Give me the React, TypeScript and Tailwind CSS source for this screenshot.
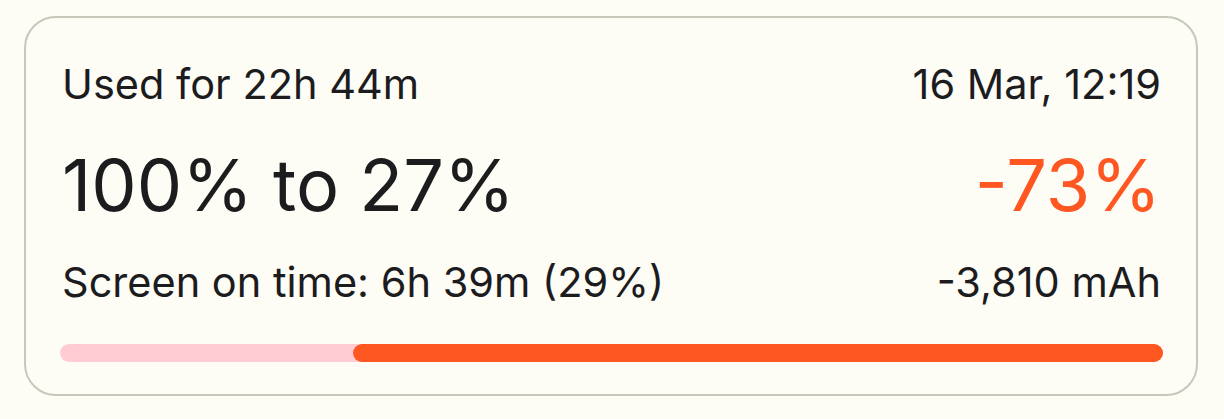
export default function App() {
  return (
    <div className="w-[1224px] h-[419px] bg-[#fdfdf6] pt-[16px] pl-[24px]" style={{ fontFamily: "Inter, 'Noto Sans', sans-serif" }}>
      <div className="w-[1174px] h-[380px] rounded-[32px] border-2 border-[#c5c8ba] bg-[#fdfdf6] pl-[34px] pr-[33px] pt-[42px] text-[#1c1c1f]">
        <div className="flex justify-between items-start text-[41.5px] leading-[48px] px-[2px]">
          <span>Used for 22h 44m</span>
          <span>16 Mar, 12:19</span>
        </div>
        <div className="mt-[37px] flex justify-between items-start text-[72px] leading-[80px] px-[2px]">
          <span>100% to 27%</span>
          <span className="text-[#ff5722]">-73%</span>
        </div>
        <div className="mt-[33px] flex justify-between items-start text-[41.5px] leading-[48px] px-[2px]">
          <span>Screen on time: 6h 39m (29%)</span>
          <span>-3,810 mAh</span>
        </div>
        <div className="mt-[38px] relative h-[18px] w-full rounded-full bg-[#ffccd3]">
          <div className="absolute right-0 top-0 h-[18px] w-[810px] rounded-full bg-[#ff5722]" />
        </div>
      </div>
    </div>
  );
}
